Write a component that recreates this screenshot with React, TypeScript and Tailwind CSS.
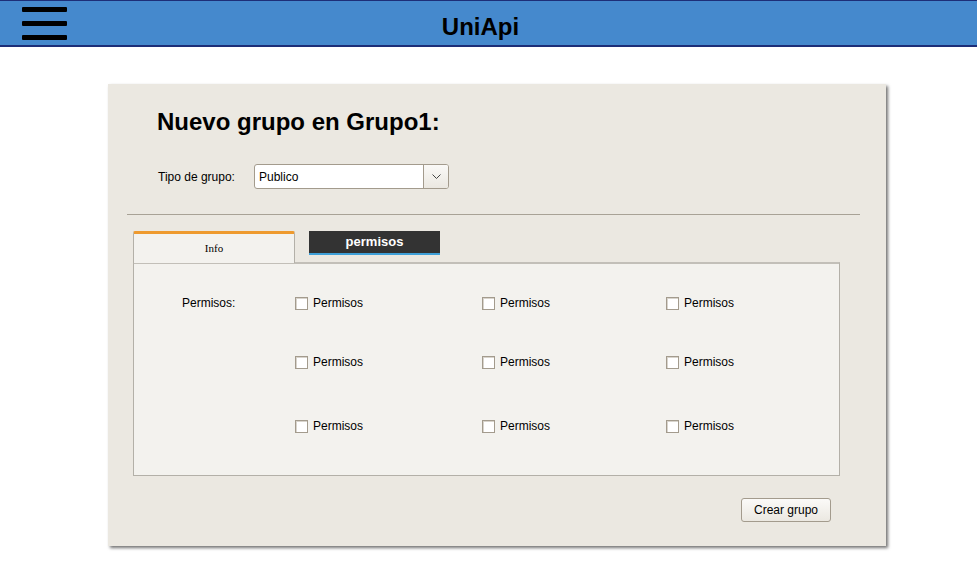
const perms = [
  ["Permisos", "Permisos", "Permisos"],
  ["Permisos", "Permisos", "Permisos"],
  ["Permisos", "Permisos", "Permisos"],
];

function Check({ label }: { label: string }) {
  return (
    <label className="flex items-center gap-[5px] text-[12px] text-black">
      <span className="w-[13px] h-[13px] bg-white border border-[#a39b8d] shadow-[inset_1px_1px_0_#d8d4cc]"></span>
      {label}
    </label>
  );
}

export default function App() {
  return (
    <div className="w-full min-h-[584px] bg-white font-['Liberation_Sans',Arial,sans-serif]">
      {/* Header */}
      <header className="h-[47px] flex items-center bg-[#4589cd] border-t border-b-2 border-[#1d2e78]">
        <div className="w-[67px] pl-[22px] flex flex-col gap-[9px]">
          <span className="block h-[5px] w-[45px] bg-black rounded-[1px]"></span>
          <span className="block h-[5px] w-[45px] bg-black rounded-[1px]"></span>
          <span className="block h-[5px] w-[45px] bg-black rounded-[1px]"></span>
        </div>
        <h1 className="flex-1 text-center pr-[83px] text-[24px] font-bold text-black pt-[8px]">UniApi</h1>
      </header>

      {/* Panel */}
      <div className="ml-[108px] mt-[37px] w-[778px] h-[462px] bg-[#ebe8e1] shadow-[2px_2px_3px_rgba(0,0,0,0.55)] pt-[24px]">
        <h2 className="pl-[49px] text-[24px] leading-[28px] font-bold text-black">Nuevo grupo en Grupo1:</h2>

        <div className="flex items-center mt-[28px] pl-[50px]">
          <span className="w-[96px] text-[12px] text-black">Tipo de grupo:</span>
          <div className="flex w-[195px] h-[25px] border border-[#a39b8d] rounded-[3px] bg-white overflow-hidden">
            <span className="flex-1 pl-[4px] flex items-center text-[12px] text-black">Publico</span>
            <span className="w-[25px] border-l border-[#a39b8d] bg-gradient-to-b from-[#faf9f7] to-[#ebe8e1] flex items-center justify-center">
              <svg width="9" height="6" viewBox="0 0 9 6"><path d="M0.5 0.5 L4.5 4.5 L8.5 0.5" fill="none" stroke="#444" strokeWidth="1" /></svg>
            </span>
          </div>
        </div>

        <div className="ml-[19px] mr-[26px] mt-[25px] h-px bg-[#a8a296]"></div>

        {/* Tabs */}
        <div className="ml-[25px] mr-[46px] mt-[16px]">
          <div className="flex items-start h-[31px]">
            <div className="w-[162px] h-[32px] bg-[#f3f2ee] border-t-[3px] border-t-[#ee9a2e] border-x border-x-[#b3b0a8] rounded-t-[2px] flex items-center justify-center text-[11px] font-['Liberation_Serif',serif] text-black relative z-10">
              Info
            </div>
            <div className="ml-[14px] w-[131px] h-[24px] bg-[#333333] border-b-2 border-[#3fa0d8] flex items-center justify-center text-[13px] font-bold text-white">
              permisos
            </div>
          </div>
          <div className="h-[214px] bg-[#f3f2ee] border border-[#b3b0a8] border-t-2 border-t-[#c2bfb8] flex">
            <div className="w-[161px] pl-[48px] pt-[30px] text-[12px] text-black">Permisos:</div>
            <div className="flex flex-col pt-[30px]">
              {perms.map((row, r) => (
                <div key={r} className={`flex ${r === 1 ? "mt-[41px]" : r === 2 ? "mt-[46px]" : ""}`}>
                  {row.map((p, c) => (
                    <div key={c} className={c === 0 ? "w-[187px]" : c === 1 ? "w-[184px]" : "w-[100px]"}>
                      <Check label={p} />
                    </div>
                  ))}
                </div>
              ))}
            </div>
          </div>
        </div>

        <div className="flex justify-end mr-[55px] mt-[22px]">
          <button className="w-[90px] h-[24px] rounded-[3px] border border-[#a39b8d] bg-gradient-to-b from-[#fbfaf8] to-[#ebe8e1] text-[12px] text-black">
            Crear grupo
          </button>
        </div>
      </div>
    </div>
  );
}
